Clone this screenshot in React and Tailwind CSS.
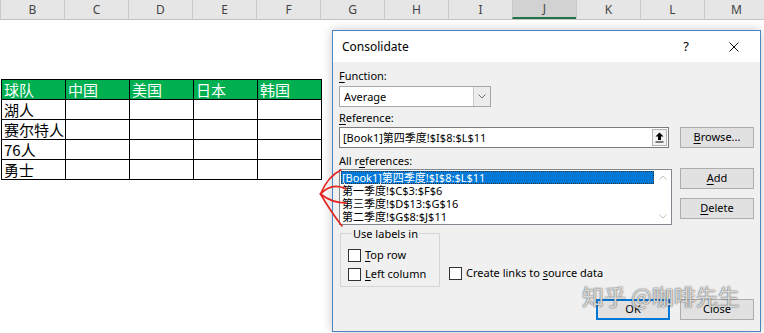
import React from 'react';

const COLUMNS = ['B', 'C', 'D', 'E', 'F', 'G', 'H', 'I', 'J', 'K', 'L', 'M'];

const TABLE = [
  ['球队', '中国', '美国', '日本', '韩国'],
  ['湖人', '', '', '', ''],
  ['赛尔特人', '', '', '', ''],
  ['76人', '', '', '', ''],
  ['勇士', '', '', '', ''],
];

const REFERENCES = [
  '[Book1]第四季度!$I$8:$L$11',
  '第一季度!$C$3:$F$6',
  '第三季度!$D$13:$G$16',
  '第二季度!$G$8:$J$11',
];

const UI_FONT = "font-['Noto_Sans','Noto_Sans_CJK_SC',sans-serif]";
const CJK_FONT = "font-['Noto_Sans_CJK_SC',sans-serif]";

// Accelerator key underline, like Windows dialogs
const Acc = ({ children }) => <span className="underline underline-offset-2">{children}</span>;

const Button = ({ children, isDefault, className = '' }) => (
  <div
    className={`w-[74px] h-[21px] flex items-center justify-center bg-[#e1e1e1] text-[11px] text-black ${
      isDefault ? 'border-2 border-[#0078d7]' : 'border border-[#adadad]'
    } ${className}`}
  >
    {children}
  </div>
);

const Checkbox = () => <div className="w-[13px] h-[13px] border border-[#333] bg-white shrink-0" />;

const ColumnHeader = () => (
  <div className="flex h-[20px] bg-[#e6e6e6] border-b border-[#c3c3c3]">
    <div className="w-[1px]" />
    {COLUMNS.map((col) => (
      <div
        key={col}
        className={`w-[64px] shrink-0 flex items-center justify-center border-l border-[#c9c9c9] text-[12px] text-[#444] ${
          col === 'J' ? 'bg-[#d2d2d2] border-b-2 border-b-[#217346]' : ''
        }`}
      >
        {col}
      </div>
    ))}
  </div>
);

const TeamTable = () => (
  <div className={`ml-[1px] mt-[59px] w-[321px] grid grid-cols-[repeat(5,64px)] border-l border-t border-black ${CJK_FONT}`}>
    {TABLE.map((row, r) =>
      row.map((cell, c) => (
        <div
          key={`${r}-${c}`}
          className={`h-[20px] border-r border-b border-black pl-[2px] text-[15px] leading-[19px] whitespace-nowrap ${
            r === 0 ? 'bg-[#00b050] text-white' : 'text-black'
          }`}
        >
          {cell}
        </div>
      ))
    )}
  </div>
);

const ConsolidateDialog = () => (
  <div className={`absolute left-[332px] top-[30px] w-[429px] h-[302px] border border-[#4b86c2] bg-[#f0f0f0] shadow-[0_0_10px_rgba(0,0,0,0.22)] ${UI_FONT}`}>
    {/* Title bar */}
    <div className="h-[31px] bg-white flex items-center pl-[9px] text-[12px] text-black">
      <span>Consolidate</span>
      <span className="ml-auto mr-[40px] text-[13px]">?</span>
      <svg width="10" height="10" viewBox="0 0 10 10" className="mr-[21px]">
        <path d="M0.5 0.5 L9.5 9.5 M9.5 0.5 L0.5 9.5" stroke="#111" strokeWidth="1" />
      </svg>
    </div>

    <div className="pl-[6px] pr-[6px] pt-[6px] text-[11px] text-black">
      <div className="h-[15px] leading-[15px]">
        <Acc>F</Acc>unction:
      </div>
      {/* Function select */}
      <div className="mt-[3px] w-[152px] h-[21px] flex border border-[#a8a8a8] bg-white">
        <div className="flex-1 pl-[4px] leading-[19px]">Average</div>
        <div className="w-[17px] border-l border-[#c9c9c9] bg-[#ececec] flex items-center justify-center">
          <svg width="8" height="5" viewBox="0 0 8 5">
            <path d="M0.5 0.5 L4 4 L7.5 0.5" fill="none" stroke="#707070" strokeWidth="1" />
          </svg>
        </div>
      </div>

      <div className="mt-[3px] h-[15px] leading-[15px]">
        <Acc>R</Acc>eference:
      </div>
      <div className="mt-[2px] flex items-start">
        <div className="w-[330px] h-[21px] flex border border-[#7a7a7a] bg-white">
          <div className="flex-1 pl-[3px] text-[11px] leading-[19px]">[Book1]第四季度!$I$8:$L$11</div>
          <div className="w-[15px] my-[1px] mr-[1px] border border-[#b5b5b5] bg-[#f3f3f3] flex items-center justify-center">
            <svg width="9" height="11" viewBox="0 0 9 11">
              <path d="M4.5 0.5 L8.5 4.5 L6 4.5 L6 8 L3 8 L3 4.5 L0.5 4.5 Z" fill="#000" />
              <path d="M0.5 10 L8.5 10" stroke="#000" strokeWidth="1" />
            </svg>
          </div>
        </div>
        <Button className="ml-[11px]">
          <span>
            <Acc>B</Acc>rowse...
          </span>
        </Button>
      </div>

      <div className="mt-[5px] h-[15px] leading-[15px]">
        All r<Acc>e</Acc>ferences:
      </div>
      <div className="mt-[1px] flex items-start">
        {/* References list */}
        <div className="w-[333px] h-[56px] flex border border-[#828790] bg-white">
          <div className="flex-1 pt-[1px] pl-[1px] text-[11px]">
            {REFERENCES.map((ref, i) => (
              <div
                key={ref}
                className={`h-[13px] leading-[13px] pl-[1px] whitespace-nowrap ${
                  i === 0 ? 'bg-[#0078d7] text-white outline outline-1 outline-dotted outline-[#333] -outline-offset-1' : 'text-black'
                }`}
              >
                {ref}
              </div>
            ))}
          </div>
          <div className="w-[17px] flex flex-col items-center justify-between py-[5px]">
            <svg width="8" height="5" viewBox="0 0 8 5">
              <path d="M0.5 4.5 L4 1 L7.5 4.5" fill="none" stroke="#c2c2c2" strokeWidth="1" />
            </svg>
            <svg width="8" height="5" viewBox="0 0 8 5">
              <path d="M0.5 0.5 L4 4 L7.5 0.5" fill="none" stroke="#c2c2c2" strokeWidth="1" />
            </svg>
          </div>
        </div>
        <div className="ml-[8px] flex flex-col gap-[9px] -mt-[1px]">
          <Button>
            <span>
              <Acc>A</Acc>dd
            </span>
          </Button>
          <Button>
            <span>
              <Acc>D</Acc>elete
            </span>
          </Button>
        </div>
      </div>

      {/* Labels group and links option */}
      <div className="mt-[1px] flex items-end">
        <fieldset className="ml-[1px] w-[100px] border border-[#d5d5d5] pl-[7px] pt-[5px] pb-[2px]">
          <legend className="ml-[4px] px-[1px] h-[15px] leading-[15px]">Use labels in</legend>
          <div className="h-[19px] flex items-center gap-[4px]">
            <Checkbox />
            <span>
              <Acc>T</Acc>op row
            </span>
          </div>
          <div className="h-[19px] flex items-center gap-[4px]">
            <Checkbox />
            <span>
              <Acc>L</Acc>eft column
            </span>
          </div>
        </fieldset>
        <div className="ml-[9px] mb-[4px] h-[19px] flex items-center gap-[4px]">
          <Checkbox />
          <span>
            Create links to <Acc>s</Acc>ource data
          </span>
        </div>
      </div>

      <div className="mt-[12px] flex justify-end gap-[10px]">
        <Button isDefault>OK</Button>
        <Button>Close</Button>
      </div>
    </div>
  </div>
);

const RedMarker = () => (
  <svg className="absolute left-[310px] top-[160px]" width="45" height="75" viewBox="310 160 45 75">
    <g fill="none" stroke="#e3231f" strokeWidth="1.6" strokeLinecap="round">
      <path d="M341 170 Q328 176 320.5 194" />
      <path d="M346 189 Q332 182 320.5 194" />
      <path d="M346 203 Q332 203 320.5 194" />
      <path d="M342 226 Q331 212 320.5 194" />
    </g>
  </svg>
);

export default function App() {
  return (
    <div className={`relative w-[764px] h-[333px] bg-white overflow-hidden ${UI_FONT}`}>
      <ColumnHeader />
      <TeamTable />
      <ConsolidateDialog />
      <RedMarker />
      {/* watermark */}
      <div
        className={`absolute left-[582px] top-[282px] text-[22px] leading-[26px] whitespace-nowrap text-white/75 [text-shadow:0_0_1px_#555,0_0_2px_rgba(0,0,0,0.45)] ${CJK_FONT}`}
      >
        知乎 @咖啡先生
      </div>
    </div>
  );
}
